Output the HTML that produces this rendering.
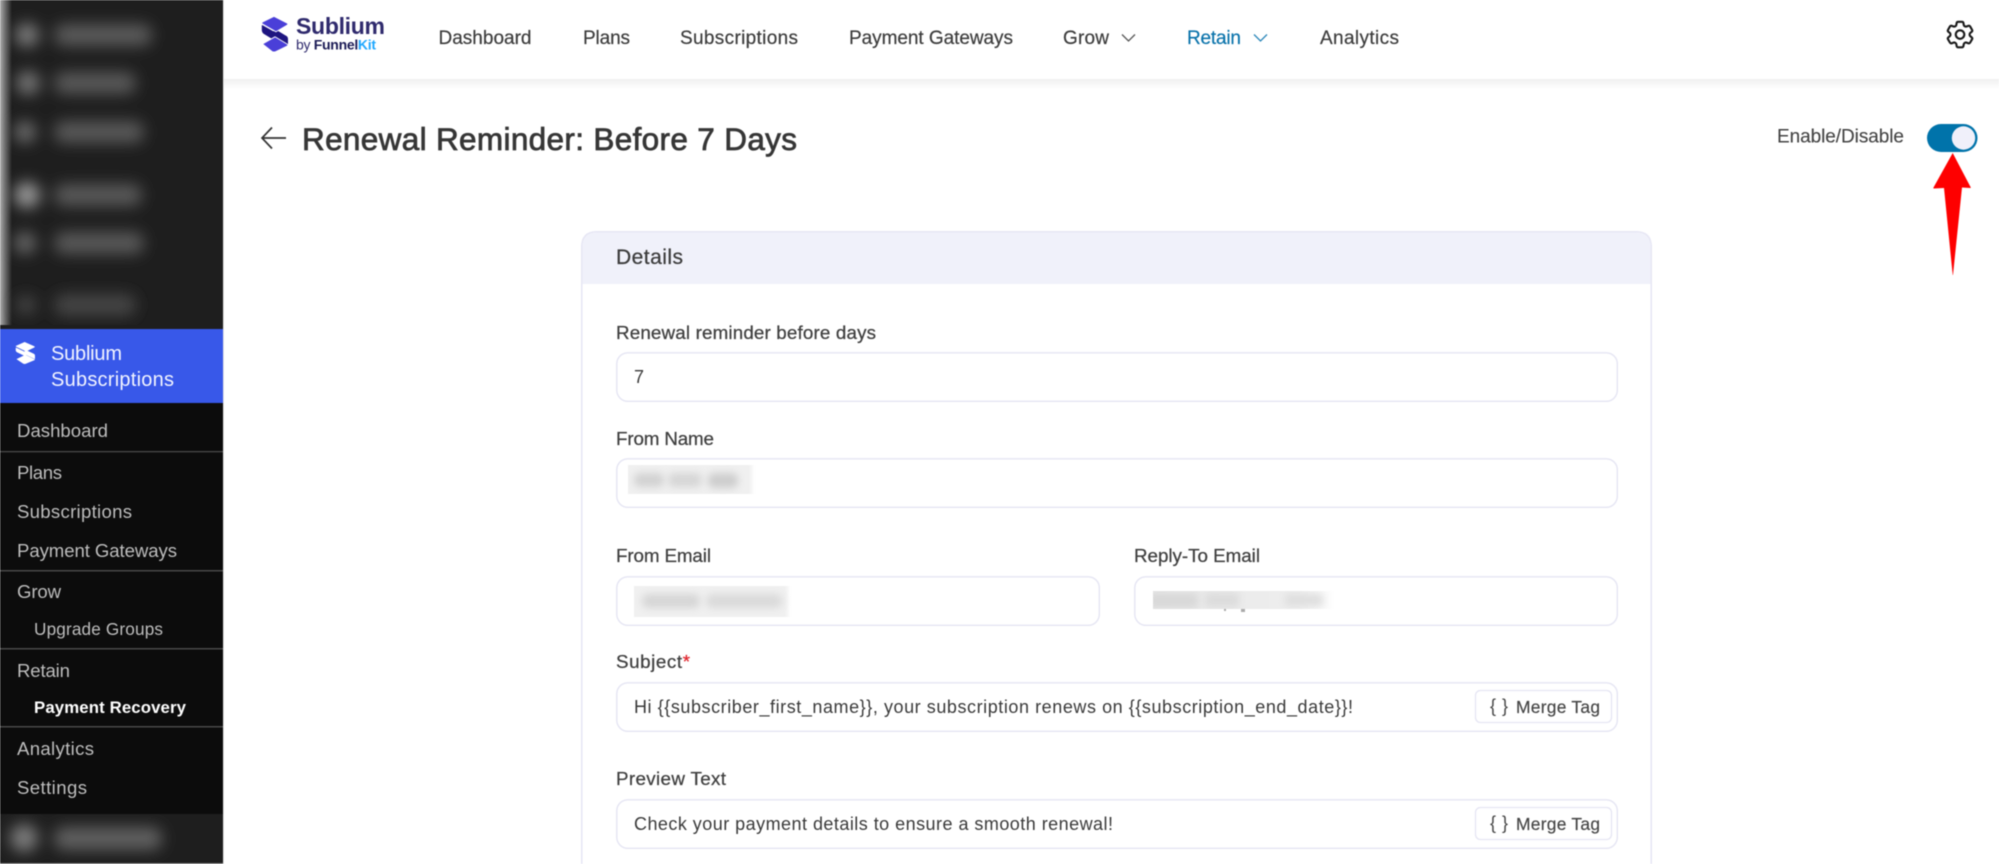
<!DOCTYPE html>
<html lang="en"><head><meta charset="utf-8"><title>Renewal Reminder: Before 7 Days</title>
<style>
html,body{margin:0;padding:0;background:#fff;width:1999px;height:864px;overflow:hidden}
svg{display:block;filter:blur(.4px)}
text{font-family:"Liberation Sans",sans-serif}
.s{font-size:18.6px;fill:#bdbdbd}
.n{font-size:19px;fill:#3c3c3c;stroke:#3c3c3c;stroke-width:.2px}
.l{font-size:18.8px;fill:#3f3f3f;stroke:#3f3f3f;stroke-width:.25px}
.v{font-size:18px;fill:#3a3a3a}
.m{font-size:17.4px;fill:#444;stroke:#444;stroke-width:.15px}
.box{fill:#fff;stroke:#e5e5f3;stroke-width:1.4}
.btn{fill:#fff;stroke:#e5e5f3;stroke-width:1.3}
.div{fill:#484848}
</style></head><body>
<svg width="1999" height="864" viewBox="0 0 1999 864" xmlns="http://www.w3.org/2000/svg">
<defs>
<filter id="b6" filterUnits="userSpaceOnUse" x="0" y="0" width="223" height="864"><feGaussianBlur stdDeviation="7.500"/></filter>
<filter id="b3" x="-30%" y="-120%" width="160%" height="340%"><feGaussianBlur stdDeviation="4"/></filter>
<filter id="be" x="-20%" y="-20%" width="140%" height="140%"><feGaussianBlur stdDeviation="2"/></filter>
<linearGradient id="strip" x1="0" x2="1"><stop offset="0" stop-color="#adadad"/><stop offset=".4" stop-color="#707070"/><stop offset="1" stop-color="#1e1e1e"/></linearGradient>
<linearGradient id="sh" x1="0" x2="0" y1="0" y2="1"><stop offset="0" stop-color="#f0f0f0"/><stop offset="1" stop-color="#fff"/></linearGradient>
<linearGradient id="fade" x1="0" x2="1"><stop offset="0" stop-color="#e8e8e8"/><stop offset=".8" stop-color="#eeeeee"/><stop offset="1" stop-color="#fff"/></linearGradient>
<clipPath id="c1"><rect x="628" y="465" width="130" height="29"/></clipPath>
<clipPath id="c2"><rect x="634" y="586" width="162" height="31"/></clipPath>
<clipPath id="c3"><rect x="1153" y="591" width="182" height="18"/></clipPath>
<clipPath id="cs"><rect x="0" y="0" width="223" height="325"/></clipPath>
<clipPath id="cb"><rect x="0" y="814" width="223" height="49"/></clipPath>
</defs>

<!-- sidebar -->
<rect x="0" y="0" width="223" height="864" fill="#0c0c0c"/>
<rect x="0" y="0" width="223" height="329" fill="#1e1e1e"/>
<g clip-path="url(#cs)">
<rect x="0" y="0" width="12" height="325" fill="url(#strip)"/>
<g filter="url(#b6)">
<circle cx="27" cy="35" r="12" fill="#7c7c7c"/><circle cx="28" cy="83" r="12" fill="#747474"/><circle cx="25" cy="132" r="11" fill="#6c6c6c"/><circle cx="27" cy="195" r="13" fill="#989898"/><circle cx="25" cy="243" r="11" fill="#686868"/><circle cx="26" cy="305" r="10" fill="#444"/>
<rect x="54" y="24" width="98" height="22" rx="10" fill="#5a5a5a"/><rect x="54" y="72" width="82" height="22" rx="10" fill="#585858"/><rect x="54" y="121" width="90" height="22" rx="10" fill="#585858"/><rect x="54" y="184" width="88" height="22" rx="10" fill="#585858"/><rect x="54" y="232" width="90" height="22" rx="10" fill="#585858"/><rect x="54" y="294" width="82" height="22" rx="10" fill="#444"/>
</g>
</g>
<rect x="0" y="329" width="223" height="74" fill="#3858e9"/>
<g fill="#fff" transform="translate(15 342) scale(.74 .61)">
<path d="M13 0 L26 7 Q27.500 8 26 9 L15 15.500 L2 8 Q0 7 2 6Z"/><path d="M1 9 L15 17 V24 L3 17 Q1 16 1 14Z"/>
<path d="M2 28 L14 21 L26 28 Q27.500 29 26 30 L15 35.500 Q13 36.500 11 35.500Z"/><path d="M27 28 V22 Q27 20 25 19 L13 12 V20Z"/>
</g>
<text x="51" y="360" font-size="20" fill="#f2f4ff" textLength="71">Sublium</text>
<text x="51" y="386" font-size="20" fill="#f2f4ff" textLength="123">Subscriptions</text>

<text class="s" x="17" y="437" textLength="91">Dashboard</text>
<rect class="div" x="0" y="451" width="223" height="1.300"/>
<text class="s" x="17" y="479" textLength="45">Plans</text>
<text class="s" x="17" y="518" textLength="115">Subscriptions</text>
<text class="s" x="17" y="557" textLength="160">Payment Gateways</text>
<rect class="div" x="0" y="570" width="223" height="1.500"/>
<text class="s" x="17" y="598" textLength="44">Grow</text>
<text class="s" x="34" y="635" textLength="129" style="font-size:17.2px">Upgrade Groups</text>
<rect class="div" x="0" y="648" width="223" height="1.500"/>
<text class="s" x="17" y="677" textLength="53">Retain</text>
<text x="34" y="713" font-size="16.800" font-weight="700" fill="#fff" textLength="152">Payment Recovery</text>
<rect class="div" x="0" y="726" width="223" height="1.500"/>
<text class="s" x="17" y="755" textLength="77">Analytics</text>
<text class="s" x="17" y="794" textLength="70">Settings</text>
<rect x="0" y="814" width="223" height="49" fill="#1e1e1e"/>
<rect x="0" y="863" width="223" height="1" fill="#777"/>
<g clip-path="url(#cb)"><g filter="url(#b6)">
<circle cx="24" cy="838" r="14" fill="#7c7c7c"/>
<rect x="54" y="827" width="108" height="23" rx="10" fill="#606060"/>
</g></g>
<rect x="223" y="0" width="1" height="864" fill="#e6e6e6"/>

<!-- top bar -->
<rect x="224" y="79" width="1775" height="10" fill="url(#sh)"/>
<g transform="translate(261 16)" stroke-linejoin="round">
<path fill="#1e1580" d="M26.500 28 V23 Q26.500 21 24.500 20 L13 13 V20Z" stroke="#1e1580" stroke-width="1"/>
<path fill="#4a3fd8" stroke="#fff" stroke-width=".9" d="M13 .3 L26 7 Q27.800 8 26 9.200 L15 15.800 L1.500 8 Q0 7 1.500 6Z"/>
<path fill="#1e1580" stroke="#1e1580" stroke-width=".8" d="M1.200 9.500 L14.500 17 V24.500 L3 17.500 Q1.200 16.300 1.200 14Z"/>
<path fill="#4a3fd8" stroke="#fff" stroke-width=".9" d="M1.500 28 L14 20.800 L26 28 Q27.800 29 26 30.200 L15 35.500 Q13 36.500 11 35.500Z"/>
</g>
<text x="296" y="34" font-size="23" font-weight="700" fill="#2f2a6d" textLength="89">Sublium</text>
<text x="296" y="49.500" font-size="14" fill="#2f2a6d" textLength="80">by <tspan font-weight="700" fill="#1b1b55">Funnel</tspan><tspan font-weight="700" fill="#1fa8ff">Kit</tspan></text>

<text class="n" x="438.500" y="44" textLength="93">Dashboard</text>
<text class="n" x="583" y="44" textLength="47">Plans</text>
<text class="n" x="680" y="44" textLength="118">Subscriptions</text>
<text class="n" x="849" y="44" textLength="164">Payment Gateways</text>
<text class="n" x="1063" y="44" textLength="46">Grow</text>
<path d="M1122 34.500 L1128.500 41 L1135 34.500" fill="none" stroke="#555" stroke-width="1.300"/>
<text class="n" x="1187" y="44" textLength="54" style="fill:#0a73ab;stroke:#0a73ab">Retain</text>
<path d="M1254 34.500 L1260.500 41 L1267 34.500" fill="none" stroke="#2a86b8" stroke-width="1.300"/>
<text class="n" x="1320" y="44" textLength="79">Analytics</text>

<g transform="translate(1943 17.500) scale(1.42)" fill="none" stroke="#1a1a1a" stroke-width="1.500" stroke-linecap="round" stroke-linejoin="round">
<path d="M9.594 3.94c.09-.542.56-.94 1.11-.94h2.593c.55 0 1.02.398 1.11.94l.213 1.281c.063.374.313.686.645.87.074.04.147.083.22.127.324.196.72.257 1.075.124l1.217-.456a1.125 1.125 0 011.37.49l1.296 2.247a1.125 1.125 0 01-.26 1.431l-1.003.827c-.293.24-.438.613-.431.992a6.759 6.759 0 010 .255c-.007.378.138.75.43.99l1.005.828c.424.35.534.954.26 1.43l-1.298 2.247a1.125 1.125 0 01-1.369.491l-1.217-.456c-.355-.133-.75-.072-1.076.124a6.57 6.57 0 01-.22.128c-.331.183-.581.495-.644.869l-.213 1.28c-.09.543-.56.941-1.11.941h-2.594c-.55 0-1.02-.398-1.11-.94l-.213-1.281c-.062-.374-.312-.686-.644-.87a6.52 6.52 0 01-.22-.127c-.325-.196-.72-.257-1.076-.124l-1.217.456a1.125 1.125 0 01-1.369-.49l-1.297-2.247a1.125 1.125 0 01.26-1.431l1.004-.827c.292-.24.437-.613.43-.992a6.932 6.932 0 010-.255c.007-.378-.138-.75-.43-.99l-1.004-.828a1.125 1.125 0 01-.26-1.43l1.297-2.247a1.125 1.125 0 011.37-.491l1.216.456c.356.133.751.072 1.076-.124.072-.044.146-.087.22-.128.332-.183.582-.495.644-.869l.214-1.281z"/>
<circle cx="12" cy="12" r="3"/>
</g>

<!-- page heading -->
<path d="M272 127.500 L262 138 L272 148.500 M262 138 H286" fill="none" stroke="#333" stroke-width="1.700"/>
<text x="302" y="150" font-size="31.500" fill="#363636" stroke="#363636" stroke-width=".75" textLength="495">Renewal Reminder: Before 7 Days</text>
<text x="1777" y="142.500" font-size="19" fill="#444" stroke="#444" stroke-width=".12" textLength="127">Enable/Disable</text>
<rect x="1927" y="124" width="50.500" height="28" rx="14" fill="#0073aa"/>
<circle cx="1963.500" cy="138" r="11.700" fill="#f0f0fa"/>
<path d="M1952.700 153 L1970.800 187.500 Q1971 188 1970 188 L1962 187.500 L1953 275 H1952.700 L1944 188 L1934 188.500 Q1933 188.500 1933.500 187.500Z" fill="#fe0000"/>

<!-- card -->
<path d="M581.750 864 V247 Q581.750 231.750 597 231.750 H1636 Q1651.250 231.750 1651.250 247 V864" fill="#fff" stroke="#e6e6f4" stroke-width="1.500"/>
<path d="M582.500 284 V247 Q582.500 232.500 597 232.500 H1636 Q1650.500 232.500 1650.500 247 V284Z" fill="#f0f1fa"/>
<text x="616" y="264" font-size="21" fill="#3c3c3c" stroke="#3c3c3c" stroke-width=".25" textLength="67">Details</text>

<text class="l" x="616" y="339" textLength="260">Renewal reminder before days</text>
<rect class="box" x="616.800" y="352.800" width="1000.500" height="48.500" rx="11"/>
<text class="v" x="634" y="383">7</text>

<text class="l" x="616" y="445" textLength="98">From Name</text>
<rect class="box" x="616.800" y="458.800" width="1000.500" height="48.500" rx="11"/>
<g clip-path="url(#c1)"><rect x="624" y="461" width="128" height="37" fill="#f0f0f0" filter="url(#be)"/><rect x="634" y="473" width="30" height="14" rx="6" fill="#d2d2d2" filter="url(#b3)"/><rect x="668" y="473" width="34" height="14" rx="6" fill="#d6d6d6" filter="url(#b3)"/><rect x="708" y="473" width="30" height="15" rx="6" fill="#cdcdcd" filter="url(#b3)"/></g>

<text class="l" x="616" y="562" textLength="95">From Email</text>
<rect class="box" x="616.800" y="576.800" width="482.500" height="48.500" rx="11"/>
<g clip-path="url(#c2)"><rect x="630" y="582" width="158" height="39" fill="#f0f0f0" filter="url(#be)"/><rect x="642" y="594" width="58" height="14" rx="6" fill="#d6d6d6" filter="url(#b3)"/><rect x="706" y="594" width="76" height="14" rx="6" fill="#dadada" filter="url(#b3)"/></g>

<text class="l" x="1134" y="562" textLength="126">Reply-To Email</text>
<rect class="box" x="1134.800" y="576.800" width="482.500" height="48.500" rx="11"/>
<g clip-path="url(#c3)"><rect x="1153" y="591" width="182" height="18" fill="url(#fade)"/><rect x="1148" y="593" width="50" height="15" fill="#d8d8d8" filter="url(#b3)"/><rect x="1205" y="593" width="34" height="14" fill="#dcdcdc" filter="url(#b3)"/><rect x="1285" y="594" width="38" height="12" fill="#dedede" filter="url(#b3)"/></g>
<rect x="1224" y="609" width="2" height="2" fill="#aaa"/><rect x="1241" y="609" width="4" height="3" fill="#aaa"/>

<text class="l" x="616" y="668" textLength="74">Subject<tspan fill="#e0242c" stroke="#e0242c">*</tspan></text>
<rect class="box" x="616.800" y="682.800" width="1000.500" height="48.500" rx="11"/>
<text class="v" x="634" y="713" textLength="719">Hi {{subscriber_first_name}}, your subscription renews on {{subscription_end_date}}!</text>
<rect class="btn" x="1475.500" y="690.500" width="136" height="32" rx="5"/>
<text class="m" x="1490" y="712" textLength="18" style="stroke:none;font-size:18px">{ }</text>
<text class="m" x="1516" y="713" textLength="84">Merge Tag</text>

<text class="l" x="616" y="785" textLength="110">Preview Text</text>
<rect class="box" x="616.800" y="799.800" width="1000.500" height="48.500" rx="11"/>
<text class="v" x="634" y="830" textLength="479">Check your payment details to ensure a smooth renewal!</text>
<rect class="btn" x="1475.500" y="807.500" width="136" height="32" rx="5"/>
<text class="m" x="1490" y="829" textLength="18" style="stroke:none;font-size:18px">{ }</text>
<text class="m" x="1516" y="830" textLength="84">Merge Tag</text>
</svg>
</body></html>
